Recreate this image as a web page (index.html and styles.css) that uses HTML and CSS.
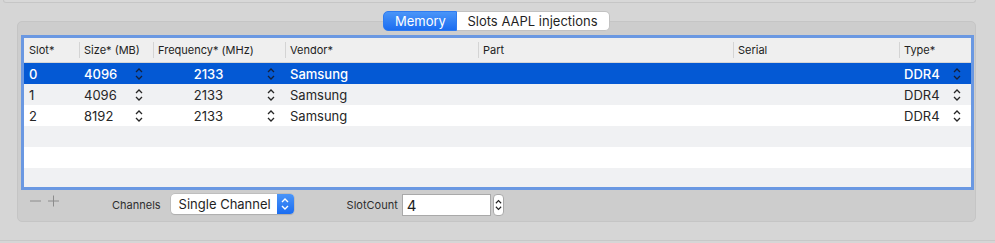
FILE: index.html
```html
<!DOCTYPE html>
<html lang="en">
<head>
  <meta charset="UTF-8">
  <title>Memory</title>
  <link rel="stylesheet" href="styles.css">
</head>
<body>
  <div class="window">
    <div class="top-box"></div>

    <div class="group">
      <!-- Onglets -->
      <div class="tabs">
        <span class="tab active">Memory</span>
        <span class="tab">Slots AAPL injections</span>
      </div>

      <!-- Tableau des slots -->
      <div class="table">
        <div class="row head">
          <div class="hcell">Slot*</div>
          <div class="hcell sep">Size* (MB)</div>
          <div class="hcell sep">Frequency* (MHz)</div>
          <div class="hcell sep">Vendor*</div>
          <div class="hcell sep">Part</div>
          <div class="hcell sep">Serial</div>
          <div class="hcell sep">Type*</div>
        </div>

        <div class="row sel">
          <div class="cell">0</div>
          <div class="cell step"><span>4096</span><svg class="chev" viewBox="0 0 8 14"><polyline points="1,5 4,2 7,5"/><polyline points="1,9 4,12 7,9"/></svg></div>
          <div class="cell step"><span class="mid">2133</span><svg class="chev" viewBox="0 0 8 14"><polyline points="1,5 4,2 7,5"/><polyline points="1,9 4,12 7,9"/></svg></div>
          <div class="cell">Samsung</div>
          <div class="cell"></div>
          <div class="cell"></div>
          <div class="cell step"><span>DDR4</span><svg class="chev" viewBox="0 0 8 14"><polyline points="1,5 4,2 7,5"/><polyline points="1,9 4,12 7,9"/></svg></div>
        </div>

        <div class="row alt">
          <div class="cell">1</div>
          <div class="cell step"><span>4096</span><svg class="chev" viewBox="0 0 8 14"><polyline points="1,5 4,2 7,5"/><polyline points="1,9 4,12 7,9"/></svg></div>
          <div class="cell step"><span class="mid">2133</span><svg class="chev" viewBox="0 0 8 14"><polyline points="1,5 4,2 7,5"/><polyline points="1,9 4,12 7,9"/></svg></div>
          <div class="cell">Samsung</div>
          <div class="cell"></div>
          <div class="cell"></div>
          <div class="cell step"><span>DDR4</span><svg class="chev" viewBox="0 0 8 14"><polyline points="1,5 4,2 7,5"/><polyline points="1,9 4,12 7,9"/></svg></div>
        </div>

        <div class="row">
          <div class="cell">2</div>
          <div class="cell step"><span>8192</span><svg class="chev" viewBox="0 0 8 14"><polyline points="1,5 4,2 7,5"/><polyline points="1,9 4,12 7,9"/></svg></div>
          <div class="cell step"><span class="mid">2133</span><svg class="chev" viewBox="0 0 8 14"><polyline points="1,5 4,2 7,5"/><polyline points="1,9 4,12 7,9"/></svg></div>
          <div class="cell">Samsung</div>
          <div class="cell"></div>
          <div class="cell"></div>
          <div class="cell step"><span>DDR4</span><svg class="chev" viewBox="0 0 8 14"><polyline points="1,5 4,2 7,5"/><polyline points="1,9 4,12 7,9"/></svg></div>
        </div>

        <div class="row alt empty"></div>
        <div class="row empty"></div>
        <div class="row alt empty"></div>
      </div>

      <!-- Contrôles du bas -->
      <div class="controls">
        <svg class="addrem" viewBox="0 0 30 12">
          <line x1="0" y1="6" x2="11" y2="6"/>
          <line x1="18" y1="6" x2="29" y2="6"/>
          <line x1="23.5" y1="0.5" x2="23.5" y2="11.5"/>
        </svg>

        <span class="label channels">Channels</span>
        <div class="popup">
          <span class="popup-text">Single Channel</span>
          <span class="popup-cap"><svg viewBox="0 0 8 14"><polyline points="1,5 4,2 7,5"/><polyline points="1,9 4,12 7,9"/></svg></span>
        </div>

        <span class="label slotcount">SlotCount</span>
        <div class="field">4</div>
        <div class="stepper"><svg viewBox="0 0 8 14"><polyline points="1,5 4,2 7,5"/><polyline points="1,9 4,12 7,9"/></svg></div>
      </div>
    </div>
  </div>
</body>
</html>
```

FILE: styles.css
```css
body {
  margin: 0;
  padding: 0;
  background: #d6d6d6;
  font-family: Inter, "Noto Sans", sans-serif;
  color: #262626;
}
.window {
  height: 241px;
  padding-left: 3px;
  border-bottom: 1px solid #c8c8c8;
  box-sizing: border-box;
  background: #d6d6d6;
}
.top-box {
  width: 973px;
  height: 3px;
  box-sizing: border-box;
  background: #d8d8d8;
  border: 1px solid #c6c6c6;
  border-top: none;
  border-radius: 0 0 4px 4px;
}
.group {
  margin: 18px 0 0 14px;
  width: 959px;
  height: 201px;
  box-sizing: border-box;
  padding: 0 1px 5px 3px;
  background: #cdcdcd;
  border: 1px solid #c5c5c5;
  border-radius: 5px;
}
.tabs {
  display: flex;
  justify-content: center;
  margin: -11px 0 0 -2px;
  height: 20px;
}
.tab {
  height: 20px;
  box-sizing: border-box;
  padding: 0 11px 0 10px;
  font-size: 13px;
  line-height: 18px;
  background: #fff;
  border: 1px solid #c2c2c2;
  border-left: none;
  border-radius: 0 5px 5px 0;
  color: #1f1f1f;
}
.tab.active {
  width: 74px;
  padding: 0;
  text-align: center;
  color: #fff;
  background: linear-gradient(#4a95f8, #1b6df1);
  border: 1px solid #2f7bf0;
  border-radius: 5px 0 0 5px;
}
.table {
  margin-top: 4px;
  height: 155px;
  box-sizing: border-box;
  border: 3px solid #6a98e2;
  background: #fff;
  overflow: hidden;
}
.row {
  display: grid;
  grid-template-columns: 55px 74px 132px 193px 255px 166px 1fr;
  height: 21px;
  align-items: center;
  font-size: 13px;
}
.row.alt {
  background: #f0f1f3;
}
.row.sel {
  background: #0459d4;
  color: #fff;
  font-weight: 500;
}
.row.head {
  height: 25px;
  box-sizing: border-box;
  background: #efefef;
  border-bottom: 1px solid #d6d6d6;
  font-size: 11px;
  color: #222;
}
.hcell {
  height: 16px;
  line-height: 16px;
  padding-left: 5px;
}
.hcell.sep {
  border-left: 1px solid #d4d4d4;
  padding-left: 4px;
}
.cell {
  padding-left: 5px;
  white-space: nowrap;
}
.cell.step {
  display: flex;
  align-items: center;
  justify-content: space-between;
  padding-right: 10px;
}
.cell .mid {
  flex: 1;
  text-align: center;
  padding-right: 8px;
}
.chev {
  width: 8px;
  height: 14px;
  fill: none;
  stroke: #262626;
  stroke-width: 1.3;
}
.row.sel .chev {
  stroke: #14203a;
}
.controls {
  display: flex;
  align-items: center;
  margin-top: 4px;
  height: 22px;
}
.addrem {
  align-self: flex-start;
  margin: 1px 0 0 9px;
  width: 30px;
  height: 12px;
  stroke: #8c8c8c;
  stroke-width: 1;
}
.label {
  font-size: 11px;
  color: #2e2e2e;
}
.channels {
  margin-left: 52px;
}
.popup {
  display: flex;
  margin-left: 10px;
  width: 123px;
  height: 20px;
  align-self: flex-start;
  background: #fff;
  border-radius: 4px;
  box-shadow: 0 0 0 0.5px #b0b0b0, 0 1px 1px rgba(0, 0, 0, 0.15);
  overflow: hidden;
}
.popup-text {
  flex: 1;
  padding-left: 8px;
  font-size: 13px;
  line-height: 20px;
  color: #1f1f1f;
}
.popup-cap {
  width: 17px;
  display: flex;
  align-items: center;
  justify-content: center;
  background: linear-gradient(#4a95f8, #1b6df1);
}
.popup-cap svg {
  width: 8px;
  height: 14px;
  fill: none;
  stroke: #fff;
  stroke-width: 1.4;
}
.slotcount {
  margin-left: 53px;
}
.field {
  margin-left: 4px;
  width: 89px;
  height: 22px;
  box-sizing: border-box;
  border: 1px solid #a9a9a9;
  background: #fff;
  padding-left: 4px;
  font-size: 15px;
  line-height: 21px;
  color: #1f1f1f;
}
.stepper {
  margin-left: 2px;
  width: 11px;
  height: 22px;
  box-sizing: border-box;
  display: flex;
  align-items: center;
  justify-content: center;
  background: #fff;
  border: 1px solid #a9a9a9;
  border-radius: 4px;
}
.stepper svg {
  width: 7px;
  height: 14px;
  fill: none;
  stroke: #222;
  stroke-width: 1.3;
}
```
